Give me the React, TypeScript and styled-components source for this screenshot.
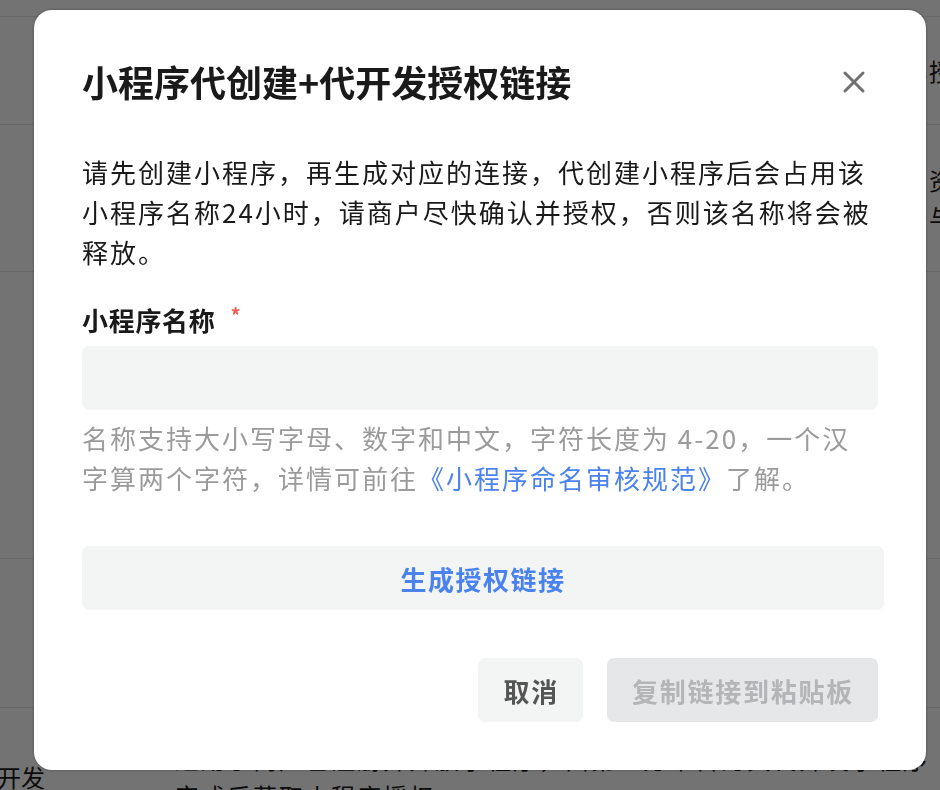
import React from "react";
import styled, { createGlobalStyle } from "styled-components";

const GlobalStyle = createGlobalStyle`
  html, body {
    margin: 0;
    padding: 0;
    width: 940px;
    height: 790px;
    overflow: hidden;
    background: #ffffff;
    font-family: "Noto Sans CJK SC", "Noto Sans", sans-serif;
  }
  * { box-sizing: border-box; }
`;

/* ---------- page behind the dialog ---------- */

const Page = styled.div`
  width: 1300px;
  padding-top: 16px;
  margin-left: -27px;
`;

const PageRow = styled.div<{ $pad: number }>`
  display: grid;
  grid-template-columns: 202px 1fr;
  border-top: 1px solid #e6e6e6;
  padding: ${(p) => p.$pad}px 0;
`;

const RowLabel = styled.div<{ $offset: number }>`
  padding-top: ${(p) => p.$offset}px;
  font-size: 24px;
  line-height: 37px;
  color: #1a1a1a;
  white-space: nowrap;
`;

const RowText = styled.div`
  font-size: 24px;
  line-height: 37px;
  letter-spacing: 2px;
  color: #1a1a1a;
  white-space: nowrap;
`;

/* ---------- dialog ---------- */

const Overlay = styled.div`
  position: fixed;
  inset: 0;
  background: rgba(0, 0, 0, 0.55);
  display: flex;
  align-items: flex-start;
  padding: 10px 14px 0 34px;
`;

const Dialog = styled.div`
  width: 892px;
  height: 760px;
  background: #ffffff;
  border-radius: 18px;
  box-shadow: 0 0 3px rgba(0, 0, 0, 0.35);
  padding: 46px 48px 48px 48px;
  display: flex;
  flex-direction: column;
`;

const Header = styled.div`
  display: flex;
  align-items: center;
  justify-content: space-between;
  height: 50px;
`;

const Title = styled.h1`
  margin: 0;
  font-size: 36px;
  line-height: 50px;
  font-weight: 700;
  color: #1a1a1a;
`;

const CloseButton = styled.button`
  width: 24px;
  height: 24px;
  padding: 0;
  border: none;
  background: transparent;
  margin-right: 12px;
  margin-top: 2px;
  display: flex;
  cursor: pointer;
`;

const Description = styled.p`
  margin: 46px 0 0;
  font-size: 26px;
  line-height: 40px;
  letter-spacing: 2px;
  color: #1a1a1a;
`;

const Label = styled.div`
  margin-top: 28px;
  font-size: 26px;
  line-height: 40px;
  font-weight: 700;
  letter-spacing: 0.7px;
  color: #1a1a1a;
  display: flex;
  align-items: flex-start;
`;

const Required = styled.span`
  color: #f25a56;
  font-size: 20px;
  line-height: 30px;
  font-weight: 700;
  margin-left: 15px;
`;

const Input = styled.input`
  margin-top: 6px;
  height: 64px;
  width: 100%;
  border: none;
  outline: none;
  border-radius: 7px;
  background: #f3f4f4;
  padding: 0 20px;
  font-family: inherit;
  font-size: 26px;
`;

const Hint = styled.p`
  margin: 8px 0 0;
  max-width: 780px;
  font-size: 26px;
  line-height: 40px;
  letter-spacing: 2px;
  color: #9b9b9b;
`;

const Link = styled.a`
  color: #4a82f0;
  text-decoration: none;
`;

const WideButton = styled.button`
  margin-top: 48px;
  margin-right: -6px;
  height: 64px;
  border: none;
  border-radius: 7px;
  background: #f3f4f4;
  color: #4a82f0;
  font-family: inherit;
  font-size: 26px;
  font-weight: 700;
  letter-spacing: 1.5px;
  cursor: pointer;
`;

const Footer = styled.div`
  margin-top: 48px;
  display: flex;
  justify-content: flex-end;
  gap: 24px;
`;

const FooterButton = styled.button<{ $disabled?: boolean }>`
  height: 64px;
  padding: 0 24px 0 25px;
  border: none;
  border-radius: 7px;
  background: ${(p) => (p.$disabled ? "#e6e7e9" : "#f3f4f4")};
  color: ${(p) => (p.$disabled ? "#b4b5b7" : "#555555")};
  font-family: inherit;
  font-size: 26px;
  font-weight: 700;
  letter-spacing: 1.75px;
  cursor: ${(p) => (p.$disabled ? "default" : "pointer")};
`;

const CloseIcon = () => (
  <svg width="24" height="24" viewBox="0 0 24 24" fill="none">
    <path
      d="M3 3 L21 21 M21 3 L3 21"
      stroke="#707070"
      strokeWidth="3"
      strokeLinecap="round"
    />
  </svg>
);

const rows: { label: string; pad: number; offset: number; lines: string[] }[] = [
  {
    label: "",
    pad: 35,
    offset: 0,
    lines: ["第三方平台可以帮助商户快速创建小程序，无需商户自行注册后再授权给服务商"],
  },
  {
    label: "",
    pad: 36,
    offset: 0,
    lines: [
      "第三方平台可以帮助已认证的公众号快速注册小程序，复用公众号资质进行认证",
      "注册完成后直接获得小程序开发权限，并可保留原有公众号的数据与资料信息",
    ],
  },
  {
    label: "",
    pad: 32,
    offset: 0,
    lines: ["商户完成授权后", "第三方平台可以代为管理", "小程序的基础信息", "类目、成员与版本", "授权可随时撤销", "请谨慎处理"],
  },
  {
    label: "",
    pad: 37,
    offset: 0,
    lines: ["第三方平台代商户开发", "并提供版本维护服务"],
  },
  {
    label: "代开发",
    pad: 32,
    offset: 18,
    lines: [
      "适用于商户已注册并开放小程序，由第三方平台为其代开发小程序",
      "完成后获取小程序授权",
    ],
  },
];

export default function App() {
  return (
    <>
      <GlobalStyle />
      <Page>
        {rows.map((r, i) => (
          <PageRow key={i} $pad={r.pad}>
            <RowLabel $offset={r.offset}>{r.label}</RowLabel>
            <RowText>
              {r.lines.map((l, j) => (
                <div key={j}>{l}</div>
              ))}
            </RowText>
          </PageRow>
        ))}
      </Page>

      <Overlay>
        <Dialog>
          <Header>
            <Title>小程序代创建+代开发授权链接</Title>
            <CloseButton aria-label="关闭">
              <CloseIcon />
            </CloseButton>
          </Header>

          <Description>
            请先创建小程序，再生成对应的连接，代创建小程序后会占用该小程序名称24小时，请商户尽快确认并授权，否则该名称将会被释放。
          </Description>

          <Label>
            小程序名称<Required>*</Required>
          </Label>
          <Input type="text" />
          <Hint>
            名称支持大小写字母、数字和中文，字符长度为 4-20，一个汉字算两个字符，详情可前往
            <Link href="#">《小程序命名审核规范》</Link>了解。
          </Hint>

          <WideButton>生成授权链接</WideButton>

          <Footer>
            <FooterButton>取消</FooterButton>
            <FooterButton $disabled>复制链接到粘贴板</FooterButton>
          </Footer>
        </Dialog>
      </Overlay>
    </>
  );
}
